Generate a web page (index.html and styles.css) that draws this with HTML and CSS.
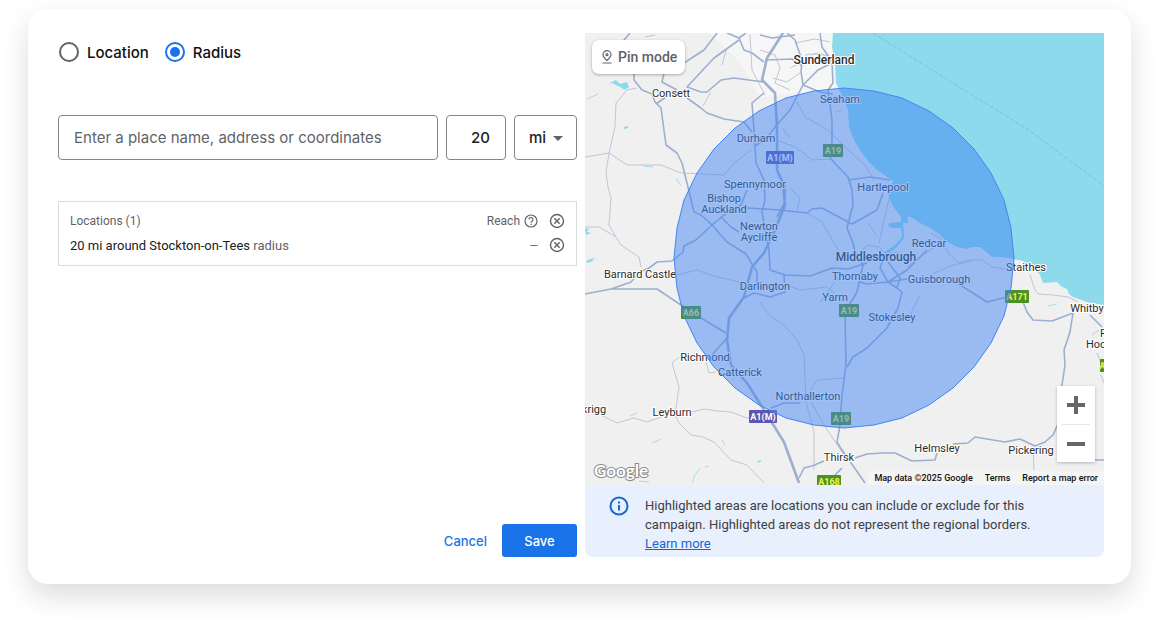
FILE: index.html
```html
<!DOCTYPE html>
<html lang="en">
<head>
<meta charset="utf-8">
<meta name="viewport" content="width=device-width, initial-scale=1">
<title>Radius targeting</title>
<link rel="stylesheet" href="styles.css">
</head>
<body>
<main class="card">
  <form class="panel">
    <div class="modes" role="radiogroup" aria-label="Targeting type">
      <label class="mode"><input class="radio" type="radio" name="mode" value="location">Location</label>
      <label class="mode"><input class="radio" type="radio" name="mode" value="radius" checked>Radius</label>
    </div>
    <div class="fields">
      <input class="field place" type="text" aria-label="Place" placeholder="Enter a place name, address or coordinates">
      <input class="field distance" type="text" inputmode="numeric" aria-label="Distance" value="20">
      <div class="unit">
        <select class="field unit-select" aria-label="Unit"><option>mi</option><option>km</option></select>
        <svg class="unit-arrow" viewBox="0 0 10 5" aria-hidden="true"><path d="M0 0h10L5 5z"/></svg>
      </div>
    </div>
    <div class="list">
      <table class="locations">
        <thead>
          <tr>
            <th scope="col">Locations (1)</th>
            <th scope="col" class="reach"><span class="reach-label">Reach
              <svg class="help" viewBox="0 0 14 14" aria-hidden="true"><circle cx="7" cy="7" r="6"/><path d="M5 5.6a2 2 0 1 1 3.1 1.6C7.300 7.700 7 8 7 8.800M7 9.800v1.200"/></svg></span></th>
            <th class="remove"><button class="icon-button" type="button" aria-label="Remove all"><svg class="close" viewBox="0 0 16 16"><circle cx="8" cy="8" r="6.500"/><path d="M5.300 5.300l5.400 5.400M10.700 5.300l-5.400 5.400"/></svg></button></th>
          </tr>
        </thead>
        <tbody>
          <tr>
            <td><span class="place-name">20 mi around Stockton-on-Tees</span> radius</td>
            <td class="reach">—</td>
            <td class="remove"><button class="icon-button" type="button" aria-label="Remove location"><svg class="close" viewBox="0 0 16 16"><circle cx="8" cy="8" r="6.500"/><path d="M5.300 5.300l5.400 5.400M10.700 5.300l-5.400 5.400"/></svg></button></td>
          </tr>
        </tbody>
      </table>
    </div>
    <div class="actions">
      <button class="button" type="button">Cancel</button>
      <button class="button primary" type="submit">Save</button>
    </div>
  </form>

  <section class="preview" aria-label="Map">
    <div class="map">
      <svg class="map-canvas" viewBox="585 33 519 452" preserveAspectRatio="xMidYMid slice">
        <path class="land" d="M585 33h519v452H585z"/>
        <path class="urban" d="M710 33H833L835 83L843 97L800 92L760 98L740 62Z"/>
        <path class="water" d="M833 33L832 47L835 63L836 83L843 97L848 110L849 127L854 140L860 150L868 161L877 170L893 181L888 191L889 198L893 206L897 212L901 217L901 222L890 223L888 226L892 228L901 228L902 237L895 245L885 252L889 253L897 247L904 238L903 223L908 223L908 216L914 219L920 223L930 228L939 234L947 242L957 247L966 249L972 247L980 247L985 251L992 257L1002 257L1013 259L1023 261L1030 268L1037 271L1040 275L1043 283L1057 282L1062 287L1067 289L1069 294L1073 297L1087 302L1104 305V33Z"/>
        <path class="water" d="M608 84L616 80L620 84L627 82L629 87L625 90L620 87L612 83ZM624 127l4-1v2l-4 1ZM587 260l8-2-4 4-4 1ZM757 461l5-1-3 3ZM585 229l4-1-2 4 4 1-5 2Z"/>
        <path class="stream" d="M587 99L598 94M630 416l7-3M652 443l9-4M692 483l3-8 5-7M705 467l4-1M639 481l10 1M722 440l3 5M676 178l5 8M643 166l10 1M790 68l18-8 6-6 15 2M1048 306l9-2"/>
        <path class="ferry" d="M873 33L940 75L1030 131L1104 186"/>
        <g class="road minor">
          <path d="M637 88L627 90L616 103L615 127L609 153L606 173L608 187L611 198L609 225L616 237L621 245L639 257L641 267"/>
          <path d="M585 157L609 153L627 165L661 165L681 173L724 175L734 163L751 150"/>
          <path d="M585 227L599 227L616 237M645 37L655 35M726 50L722 65M711 92L703 106M750 35L752 70L765 95"/>
          <path d="M760 50L775 55L780 68L775 83L790 90M773 78L787 82L800 73M795 43L815 39L830 42M805 55L820 53L833 59M797 102L805 117L828 130L848 150L865 165L874 180"/>
          <path d="M777 140L795 147L812 160L832 159M783 128L790 138M836 112L842 110M790 188L800 198L797 210M807 213L822 222L840 253M868 223L877 236M890 195L884 220L879 243"/>
          <path d="M677 275L697 270L714 276L739 282M791 287L800 290L827 287L834 293M832 268L838 281M820 302L835 282M860 253L867 245L879 247L887 255L898 252L904 262"/>
          <path d="M930 233L940 238L950 255L959 263L970 260L982 260L992 267L1010 270M930 275L950 266L971 261M907 267L927 252L940 244M920 295L910 315"/>
          <path d="M760 302L770 316L784 325L797 340L804 355L806 402L814 432L814 470M811 402L824 425L844 455M679 357L672 363L679 387L675 415L679 423L691 435L703 437L714 442L731 460L747 465L764 483"/>
          <path d="M601 415L617 423L634 418L647 422L667 415M692 412L704 409L717 411L731 412L747 418L758 420M706 362L709 373L716 372M808 395L817 380L844 378M1033 447L1034 470"/>
          <path d="M1030 275L1035 290L1038 294L1053 295L1068 297L1078 302M1092 335L1099 330M1097 353L1102 365M1101 375L1104 383"/>
        </g>
        <g class="road">
          <path d="M630 33L624 40L629 58L634 73L634 80L642 90L652 94L655 102L661 108L666 145L677 153L682 163L687 183L694 212L701 215"/>
          <path d="M717 33L704 50L684 63L664 73L662 82L677 90M739 40L714 58L687 87L701 92L707 92L721 80L734 78L764 82M666 97L656 104M687 98L701 108L707 113L724 119L744 122L752 132"/>
          <path d="M727 33L739 38L744 50L752 53L764 62M746 33L739 38M764 93L752 103L754 130L756 163L764 180L765 200L762 212L769 250L770 270L785 275L810 276L832 268L848 269L867 263"/>
          <path d="M760 35L772 38L795 35M765 60L792 59L801 65M787 33L795 40L802 60L801 72L803 85L790 110L775 127L767 138L755 146M803 85L818 70L832 63M803 85L820 92L833 94"/>
          <path d="M820 33L822 47L829 57L832 63L833 83L828 90L832 120L832 145L830 158L848 177L852 190L853 205L847 228L853 243L855 252L863 265L857 292L845 312L846 365L842 395L840 425L837 442L840 447L865 483"/>
          <path d="M848 180L870 177L890 180M701 215L712 225L727 242L746 254L757 272L757 288M721 217L731 227L739 232M747 208L780 210L807 213L812 209L822 208L852 224L877 210L883 193"/>
          <path d="M585 294L611 289L657 289L681 305L701 318L726 333M611 289L631 282L640 272L649 268L657 262L672 261L683 252L684 246L696 240L712 225L724 215L741 205L747 190"/>
          <path d="M785 185L785 202L777 217M784 275L785 292L770 297L754 293L744 298M860 282L867 284L888 282L907 279M886 252L880 268L888 282L897 288L902 292L898 308L887 328L867 348L853 357L847 367M888 262L900 278L897 288M888 282L907 270L927 250"/>
          <path d="M957 283L987 302L1007 297L1023 302L1027 312L1033 320L1052 321L1073 313L1070 332L1064 350L1065 365L1062 385L1062 415L1053 435L1045 442L1035 446L1020 439L1005 442L975 437L968 443L953 444"/>
          <path d="M937 453L935 460L912 461L895 453L883 453L867 454L855 458M1090 315L1102 327M1095 460H1104M799 478L804 468L812 466L824 461M835 475L842 468M727 338L712 355M771 408L784 403L800 403"/>
        </g>
        <path class="road major" d="M783 33L767 58L762 80L775 93L777 127L777 170L783 183L785 205L775 230L764 253L752 267L744 297L729 318L727 340L731 365L747 383L764 410L784 442L799 483"/>
        <g class="labels">
          <text class="town" x="824" y="64">Sunderland</text>
          <text x="671" y="97">Consett</text>
          <text x="840" y="103">Seaham</text>
          <text x="756" y="142">Durham</text>
          <text x="755" y="188">Spennymoor</text>
          <text x="724" y="202">Bishop</text><text x="724" y="213">Auckland</text>
          <text x="883" y="191">Hartlepool</text>
          <text x="759" y="230">Newton</text><text x="759" y="241">Aycliffe</text>
          <text x="929" y="247">Redcar</text>
          <text class="town" x="876" y="261">Middlesbrough</text>
          <text x="855" y="280">Thornaby</text>
          <text x="939" y="283">Guisborough</text>
          <text x="640" y="278">Barnard Castle</text>
          <text x="1026" y="271">Staithes</text>
          <text x="765" y="290">Darlington</text>
          <text x="835" y="301">Yarm</text>
          <text x="892" y="321">Stokesley</text>
          <text x="1087" y="312">Whitby</text>
          <text x="705" y="361">Richmond</text>
          <text x="740" y="376">Catterick</text>
          <text x="808" y="400">Northallerton</text>
          <text x="594" y="413">krigg</text>
          <text x="672" y="416">Leyburn</text>
          <text x="839" y="461">Thirsk</text>
          <text x="937" y="452">Helmsley</text>
          <text x="1031" y="454">Pickering</text>
          <text class="edge" x="1100" y="337">Robin</text><text class="edge" x="1086" y="348">Hood's Bay</text>
        </g>
        <g class="shields">
          <rect class="motorway" x="766" y="151" width="28" height="13" rx="1"/><text class="on-motorway" x="780" y="161">A1(M)</text>
          <rect class="trunk" x="823" y="144" width="20" height="13" rx="1"/><text x="833" y="154">A19</text>
          <rect class="trunk" x="681" y="306" width="20" height="13" rx="1"/><text x="691" y="316">A66</text>
          <rect class="trunk" x="1005" y="290" width="24" height="13" rx="1"/><text x="1017" y="300">A171</text>
          <rect class="trunk" x="839" y="304" width="20" height="13" rx="1"/><text x="849" y="314">A19</text>
          <rect class="motorway" x="749" y="410" width="28" height="13" rx="1"/><text class="on-motorway" x="763" y="420">A1(M)</text>
          <rect class="trunk" x="831" y="412" width="20" height="13" rx="1"/><text x="841" y="422">A19</text>
          <rect class="trunk" x="817" y="475" width="24" height="13" rx="1"/><text x="829" y="485">A168</text>
          <rect class="trunk" x="1100" y="359" width="20" height="13" rx="1"/><text x="1110" y="369">A171</text>
        </g>
        <polygon class="radius-area" points="1014,258 1011,288 1004,316 991,343 974,367 953,388 929,405 902,418 874,425 844,428 814,425 786,418 759,405 735,388 714,367 697,343 684,316 677,288 674,258 677,228 684,200 697,173 714,149 735,128 759,111 786,98 814,91 844,88 874,91 902,98 929,111 953,128 974,149 991,173 1004,200 1011,228"/>
      </svg>
      <button class="pin-mode" type="button">
        <svg class="pin" viewBox="0 0 12 14" aria-hidden="true"><path d="M6 10.500C3.500 8.300 2 6.500 2 4.700a4 4 0 0 1 8 0C10 6.500 8.500 8.300 6 10.500zM1.500 13h9"/><circle cx="6" cy="4.700" r="1"/></svg>
        Pin mode
      </button>
      <div class="zoom">
        <button class="zoom-button" type="button" aria-label="Zoom in"><svg class="zoom-icon" viewBox="0 0 18 18"><path d="M9 0v18M0 9h18"/></svg></button>
        <button class="zoom-button" type="button" aria-label="Zoom out"><svg class="zoom-icon" viewBox="0 0 18 18"><path d="M0 9h18"/></svg></button>
      </div>
      <span class="brand">Google</span>
      <div class="credits"><span>Map data ©2025 Google</span><a class="credit-link" href="#terms">Terms</a><a class="credit-link" href="#report">Report a map error</a></div>
    </div>
    <div class="notice">
      <svg class="info" viewBox="0 0 20 20" aria-hidden="true"><circle cx="10" cy="10" r="8.500"/><path d="M10 9v5.500M10 5.500v2"/></svg>
      <p class="notice-text">Highlighted areas are locations you can include or exclude for this campaign. Highlighted areas do not represent the regional borders.<br><a class="link" href="#learn">Learn more</a></p>
    </div>
  </section>
</main>
</body>
</html>
```
FILE: styles.css
```css
* {
  box-sizing: border-box;
}

body {
  margin: 0;
  padding: 9px 29px 47px 28px;
  background: #fff;
  color: #202124;
  font-family: Roboto, sans-serif;
  font-size: 13px;
}

button,
input,
select {
  margin: 0;
  font-family: inherit;
}

.card {
  display: grid;
  grid-template-columns: 1fr 1fr;
  gap: 8px;
  padding: 24px 27px 27px 30px;
  border-radius: 20px;
  background: #fff;
  box-shadow: 0 12px 28px rgba(0, 0, 0, 0.14);
}

.panel {
  display: flex;
  flex-direction: column;
  min-width: 0;
}

/* Targeting type */
.modes {
  display: flex;
  gap: 15px;
  height: 38px;
  margin-bottom: 44px;
}

.mode {
  display: flex;
  align-items: center;
  gap: 8px;
  color: #111;
  font-family: Inter, sans-serif;
  font-size: 15px;
  font-weight: 500;
}

.radio {
  appearance: none;
  display: grid;
  place-content: center;
  width: 20px;
  height: 20px;
  margin-left: 1px;
  border: 2px solid #5f6368;
  border-radius: 50%;
}

.radio:checked {
  border-color: #1a73e8;
}

.radio:checked::before {
  content: "";
  width: 10px;
  height: 10px;
  border-radius: 50%;
  background: #1a73e8;
}

/* Place, distance, unit */
.fields {
  display: flex;
  gap: 8px;
  margin-bottom: 41px;
}

.field {
  height: 45px;
  padding: 0 15px;
  border: 1px solid #80868b;
  border-radius: 4px;
  background: #fff;
  color: #202124;
  font-family: Inter, sans-serif;
  font-size: 15px;
  font-weight: 500;
}

.place {
  flex: 1;
  min-width: 0;
  font-weight: 400;
}

.place::placeholder {
  color: #5f6368;
  opacity: 1;
}

.distance {
  width: 60px;
  text-align: right;
}

.unit {
  position: relative;
  width: 63px;
}

.unit-select {
  appearance: none;
  width: 100%;
  padding: 0 14px;
}

.unit-arrow {
  position: absolute;
  top: 21px;
  right: 14px;
  width: 10px;
  height: 5px;
  fill: #5f6368;
  pointer-events: none;
}

/* Selected locations */
.list {
  padding: 7px 11px 8px;
  border: 1px solid #dadce0;
}

.locations {
  width: 100%;
  border-collapse: collapse;
  color: #5f6368;
}

.locations th,
.locations td {
  height: 24px;
  padding: 0;
  text-align: left;
}

.locations th {
  font-size: 12px;
  font-weight: 400;
}

.locations td {
  font-size: 13px;
}

.locations .reach {
  text-align: right;
}

.locations td.reach {
  font-size: 11px;
}

.reach-label {
  display: inline-flex;
  align-items: center;
  gap: 4px;
}

.locations .remove {
  width: 27px;
  text-align: right;
}

.place-name {
  color: #202124;
}

.help,
.close {
  display: block;
  fill: none;
  stroke: #5f6368;
  stroke-width: 1.2;
}

.help {
  width: 14px;
  height: 14px;
}

.close {
  width: 16px;
  height: 16px;
  stroke-width: 1.4;
}

.icon-button {
  display: inline-block;
  padding: 0;
  border: 0;
  background: none;
  vertical-align: middle;
}

/* Form buttons */
.actions {
  display: flex;
  justify-content: flex-end;
  margin-top: auto;
}

.button {
  height: 33px;
  padding: 0 15px;
  border: 0;
  border-radius: 3px;
  background: none;
  color: #1a73e8;
  font-family: Inter, sans-serif;
  font-size: 13px;
  font-weight: 500;
}

.primary {
  min-width: 75px;
  background: #1a73e8;
  color: #fff;
}

/* Map */
.preview {
  display: flex;
  flex-direction: column;
  min-width: 0;
}

.map {
  position: relative;
  aspect-ratio: 519 / 452;
  overflow: hidden;
}

.map-canvas {
  display: block;
  width: 100%;
  height: 100%;
}

.land {
  fill: #f0f0f0;
}

.urban {
  fill: #f6f6f6;
}

.water {
  fill: #8cdaeb;
}

.stream {
  fill: none;
  stroke: #a6dde8;
}

.ferry {
  fill: none;
  stroke: #70c8d6;
  stroke-dasharray: 4 2;
}

.road {
  fill: none;
  stroke: #9dafcf;
  stroke-width: 1.6;
  stroke-linejoin: round;
}

.minor {
  stroke: #c0c6d6;
  stroke-width: 1;
}

.major {
  stroke-width: 2.6;
}

.labels {
  fill: #2b2b2b;
  stroke: #fff;
  stroke-width: 2;
  stroke-linejoin: round;
  paint-order: stroke;
  font-size: 11px;
  text-anchor: middle;
}

.town {
  font-size: 12px;
  font-weight: 500;
}

.edge {
  text-anchor: start;
}

.shields {
  fill: #f7ee5a;
  font-size: 9px;
  font-weight: 700;
  text-anchor: middle;
}

.motorway {
  fill: #5b57b5;
}

.trunk {
  fill: #4c9222;
}

.on-motorway {
  fill: #fff;
}

.radius-area {
  fill: #4285f4;
  fill-opacity: 0.5;
  stroke: #4285f4;
}

.pin-mode {
  position: absolute;
  top: 7px;
  left: 7px;
  display: flex;
  align-items: center;
  gap: 5px;
  height: 34px;
  padding: 0 8px 0 9px;
  border: 0;
  border-radius: 7px;
  background: #fff;
  box-shadow: 0 1px 3px rgba(0, 0, 0, 0.3);
  color: #5f6368;
  font-size: 14px;
  font-weight: 500;
}

.pin {
  width: 12px;
  height: 14px;
  fill: none;
  stroke: #5f6368;
  stroke-width: 1.2;
}

.zoom {
  position: absolute;
  right: 9px;
  bottom: 23px;
  width: 38px;
  padding: 0 5px;
  background: #fff;
  box-shadow: 0 1px 3px rgba(0, 0, 0, 0.25);
}

.zoom-button {
  display: grid;
  place-items: center;
  width: 100%;
  height: 38px;
  padding: 0;
  border: 0;
  background: none;
}

.zoom-button + .zoom-button {
  border-top: 1px solid #e6e6e6;
}

.zoom-icon {
  width: 18px;
  height: 18px;
  stroke: #666;
  stroke-width: 4;
}

.brand {
  position: absolute;
  bottom: 3px;
  left: 9px;
  color: #fff;
  font-family: Lato, sans-serif;
  font-size: 17px;
  font-weight: 700;
  line-height: 22px;
  -webkit-text-stroke: 2px #8a8a8a;
  paint-order: stroke;
}

.credits {
  position: absolute;
  right: 0;
  bottom: 0;
  display: flex;
  gap: 12px;
  padding: 0 6px;
  background: rgba(245, 245, 245, 0.7);
  color: #111;
  font-size: 9px;
  font-weight: 500;
  line-height: 14px;
}

.credit-link {
  color: inherit;
  text-decoration: none;
}

/* Notice under the map */
.notice {
  display: flex;
  flex: 1;
  gap: 16px;
  padding: 11px 24px 4px;
  border-radius: 0 0 8px 8px;
  background: #e8f0fe;
}

.info {
  flex: none;
  width: 20px;
  height: 20px;
  fill: none;
  stroke: #1967d2;
  stroke-width: 2;
}

.notice-text {
  margin: 0;
  color: #3c4043;
  font-size: 13px;
  line-height: 19px;
}

.link {
  color: #1967d2;
}
```
